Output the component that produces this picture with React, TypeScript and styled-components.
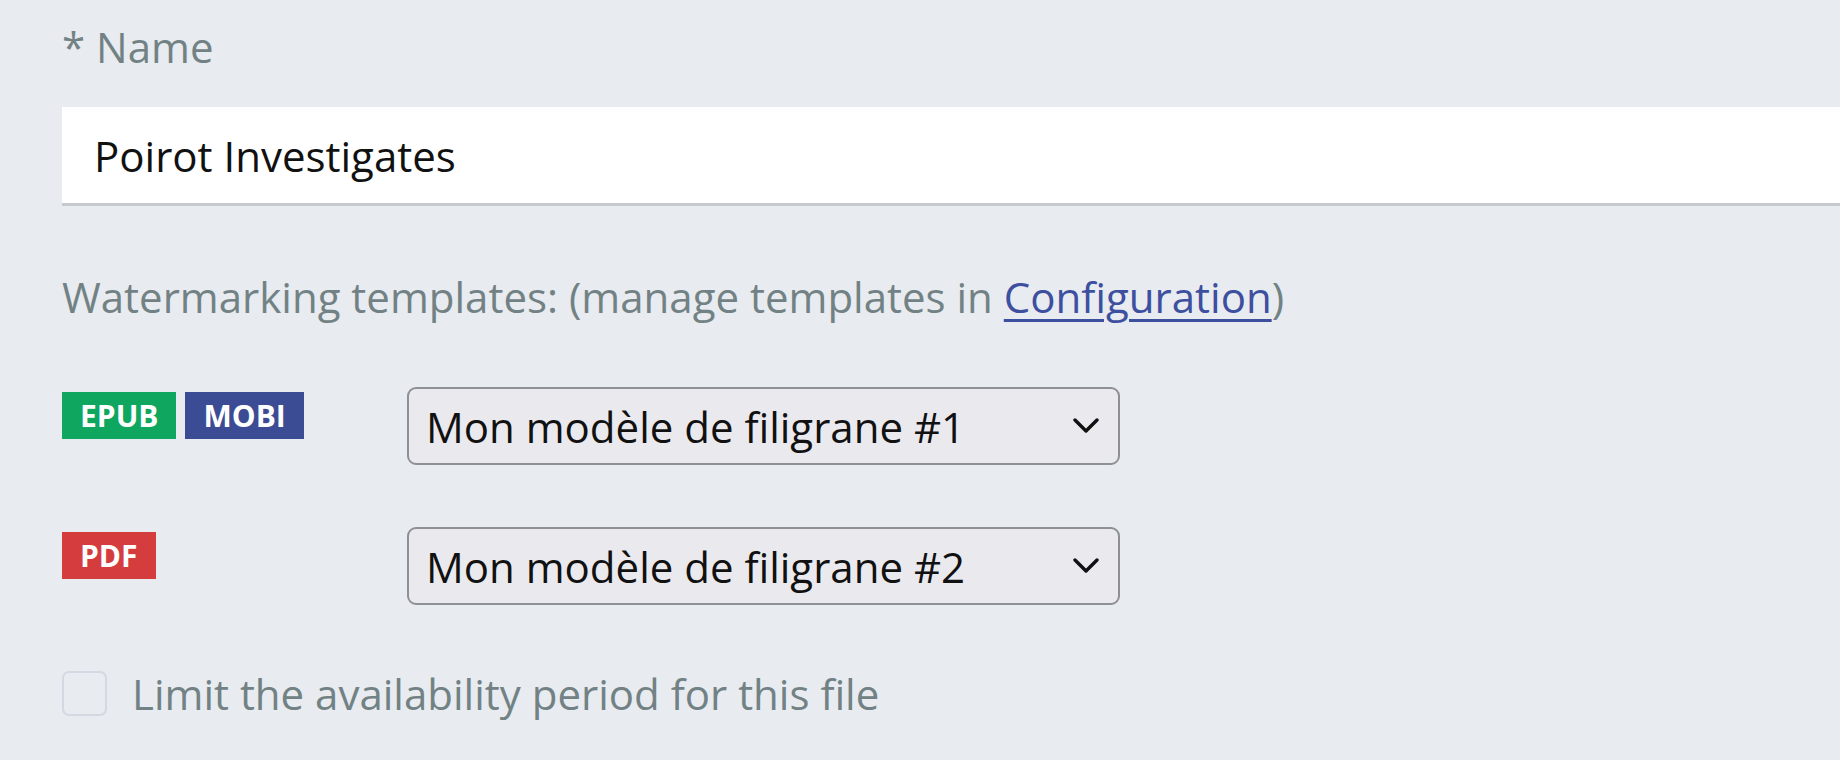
import styled, { createGlobalStyle } from "styled-components";

const GlobalStyle = createGlobalStyle`
  html, body {
    margin: 0;
    padding: 0;
    background-color: #e8ebf0;
    overflow: hidden;
  }
  body {
    font-family: "Open Sans", Lato, sans-serif;
  }
`;

const Page = styled.div`
  padding: 17px 0 0 62px;
  height: 760px;
  box-sizing: border-box;
`;

const Label = styled.label`
  display: block;
  font-size: 42px;
  line-height: 60px;
  color: #728284;
`;

const TextInput = styled.input`
  display: block;
  box-sizing: border-box;
  width: 100%;
  height: 99px;
  margin-top: 30px;
  padding: 0 0 0 32px;
  border: none;
  border-bottom: 3px solid #c6cacf;
  background: #ffffff;
  font-family: "Open Sans", Lato, sans-serif;
  font-size: 42px;
  color: #111;
  outline: none;
`;

const Hint = styled.p`
  margin: 61px 0 0;
  font-size: 42px;
  line-height: 60px;
  color: #728284;

  a {
    color: #3d4f9f;
    text-decoration: underline;
    text-underline-offset: 6px;
    text-decoration-thickness: 3px;
  }
`;

const TemplateGrid = styled.div`
  display: grid;
  grid-template-columns: 345px 713px;
  row-gap: 62px;
  margin-top: 60px;
`;

const Badges = styled.div`
  display: flex;
  gap: 9px;
  align-self: start;
  margin-top: 5px;
`;

const Badge = styled.span<{ $bg: string }>`
  display: inline-flex;
  align-items: center;
  height: 47px;
  padding: 0 18px;
  background: ${(p) => p.$bg};
  color: #fff;
  font-weight: 700;
  font-size: 30px;
`;

const SelectBox = styled.div`
  position: relative;
  height: 78px;
  box-sizing: border-box;
  border: 2px solid #8e9097;
  border-radius: 9px;
  background: #eae9ee;
  display: flex;
  align-items: center;
  padding-left: 17px;
  font-size: 42px;
  color: #111;

  svg {
    position: absolute;
    right: 19px;
    top: 50%;
    transform: translateY(-50%);
  }
`;

const CheckRow = styled.label`
  display: flex;
  align-items: center;
  gap: 25px;
  margin-top: 60px;
  font-size: 42px;
  color: #728284;
`;

const Checkbox = styled.span`
  width: 45px;
  height: 45px;
  box-sizing: border-box;
  border: 2px solid #d2d9e2;
  border-radius: 7px;
  background: #e8ebf0;
`;

const Chevron = () => (
  <svg width="26" height="16" viewBox="0 0 26 16">
    <polyline
      points="2,2 13,13 24,2"
      fill="none"
      stroke="#111"
      strokeWidth="3.4"
      strokeLinecap="round"
      strokeLinejoin="round"
    />
  </svg>
);

const templates = [
  {
    badges: [
      { label: "EPUB", bg: "#0fa65f" },
      { label: "MOBI", bg: "#3b4c94" },
    ],
    value: "Mon modèle de filigrane #1",
  },
  {
    badges: [{ label: "PDF", bg: "#d53c3e" }],
    value: "Mon modèle de filigrane #2",
  },
];

export default function App() {
  return (
    <>
      <GlobalStyle />
      <Page>
        <Label htmlFor="name">* Name</Label>
        <TextInput id="name" defaultValue="Poirot Investigates" />

        <Hint>
          Watermarking templates: (manage templates in <a href="#">Configuration</a>)
        </Hint>

        <TemplateGrid>
          {templates.map((t) => (
            <>
              <Badges key={t.value + "-b"}>
                {t.badges.map((b) => (
                  <Badge key={b.label} $bg={b.bg}>
                    {b.label}
                  </Badge>
                ))}
              </Badges>
              <SelectBox key={t.value}>
                {t.value}
                <Chevron />
              </SelectBox>
            </>
          ))}
        </TemplateGrid>

        <CheckRow>
          <Checkbox />
          Limit the availability period for this file
        </CheckRow>
      </Page>
    </>
  );
}
